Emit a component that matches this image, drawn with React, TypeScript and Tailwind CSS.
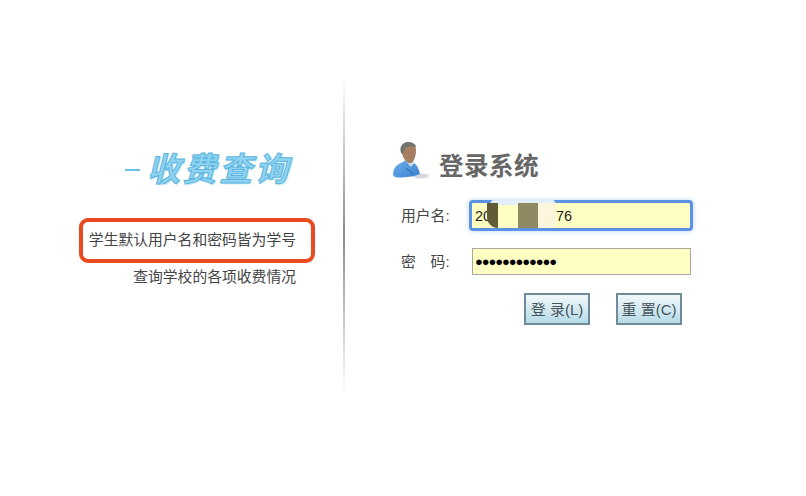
const cjk = "font-['Liberation_Sans','Noto_Sans_CJK_SC',sans-serif]";

function UserIcon() {
  return (
    <svg width="38" height="40" viewBox="0 0 38 40" className="block">
      <defs>
        <linearGradient id="shirt" x1="0" y1="0" x2="1" y2="1">
          <stop offset="0" stopColor="#6fb0ec" />
          <stop offset="1" stopColor="#3a80d0" />
        </linearGradient>
      </defs>
      <ellipse cx="29" cy="35" rx="8" ry="2.5" fill="#d5d9de" />
      <path d="M1 34c0-6 3-10 8-12l5-3 4 6 4-3c3 2 5 6 6 11-5 2-9 3-14 3-6 1-12 1-13-2z" fill="url(#shirt)" />
      <path d="M14 20l5 6 3-4-2-4z" fill="#cfdcec" />
      <path d="M14 27l7 6" stroke="#2a5f9f" strokeWidth="1" fill="none" />
      <path d="M10 8c0-4 3-6 6-6s8 2 8 7c0 6-2 12-5 13-4 1-8-4-9-10z" fill="#a67f62" />
      <path d="M9 12C7 5 11 1 16 1c4 0 8 2 8 5-3-1-6-1-9 0-2 1-3 3-4 7z" fill="#70736f" />
    </svg>
  );
}

function ToolButton({ children }: { children: string }) {
  return (
    <button className="w-[66px] h-[32px] pt-[2px] border-2 border-[#6f8b99] bg-gradient-to-b from-[#f2f8fa] to-[#b5dbe8] text-[15px] text-[#46545a] whitespace-pre">
      {children}
    </button>
  );
}

export default function App() {
  return (
    <div className={`${cjk} w-[806px] h-[496px] bg-white flex overflow-hidden`}>
      {/* Left: module title and tips */}
      <div className="w-[343px] shrink-0 flex flex-col items-end pt-[150px] pr-[47px]">
        <div className="flex items-center pr-[5px] h-[40px]">
          <div className="w-[15px] h-[2px] bg-[#6fc0e6] mr-[7px]" />
          <span className="text-[#8fd3f1] italic font-bold text-[33px] tracking-[3px] [-webkit-text-stroke:1px_#5ab6e0] [text-shadow:1px_1px_2px_#b5dff2]">
            收费查询
          </span>
        </div>
        <div className="relative mt-[40px] text-[14.8px] leading-[21px] text-[#444] whitespace-nowrap">
          学生默认用户名和密码皆为学号
          <div className="absolute left-[-10px] right-[-19px] top-[-12px] bottom-[-12px] border-[4px] border-[#ea4a1f] rounded-[9px]" />
        </div>
        <div className="mt-[16px] text-[14.8px] leading-[21px] text-[#444] whitespace-nowrap">查询学校的各项收费情况</div>
      </div>

      {/* Divider */}
      <div className="w-[2px] h-[318px] mt-[76px] bg-gradient-to-b from-transparent via-[#8a8a8a] to-transparent" />

      {/* Right: login form */}
      <div className="flex-1 flex flex-col pt-[141px] pl-[47px]">
        <div className="flex items-center h-[40px]">
          <UserIcon />
          <span className="ml-[9px] mt-[12px] text-[24.5px] font-bold text-[#666] tracking-[0.5px]">登录系统</span>
        </div>

        <div className="flex items-center h-[27px] mt-[21px] ml-[9px]">
          <label className="w-[71px] pt-[2px] text-[14.8px] text-[#444] whitespace-pre">用户名:</label>
          <div className="relative w-[218px] h-[25px] pt-[3px] bg-[#ffffc4] outline-[3px] outline-solid outline-[#5b92e4] rounded-[1px] shadow-[0_0_5px_3px_#bcd4f4] flex items-center pl-[3px] text-[14.5px] text-[#222]">
            <span className="w-[81px] shrink-0">20</span>
            <span>76</span>
            <div className="absolute left-[18px] top-[-4px] w-[66px] h-[6px] bg-[#e3eefb] rounded-t-full" />
            <div className="absolute left-[15px] top-[0px] w-[11px] h-[25px] bg-[#635a38] rounded-bl-[11px]" />
            <div className="absolute left-[46px] top-[0px] w-[20px] h-[25px] bg-[#8e8863]" />
            <div className="absolute left-[66px] top-[0px] w-[18px] h-[25px] bg-[#fdf6dc] rounded-br-[8px]" />
          </div>
        </div>

        <div className="flex items-center mt-[19px] ml-[9px]">
          <label className="w-[71px] pt-[1px] text-[14.8px] text-[#444] whitespace-pre">密　码:</label>
          <div className="w-[219px] h-[27px] bg-[#ffffc4] border border-[#a9a9a0] flex items-center pl-[2px] text-[13px] tracking-[-1.1px] text-black">
            ●●●●●●●●●●●●
          </div>
        </div>

        <div className="flex gap-[26px] mt-[18px] ml-[132px]">
          <ToolButton>{"登 录(L)"}</ToolButton>
          <ToolButton>{"重 置(C)"}</ToolButton>
        </div>
      </div>
    </div>
  );
}
